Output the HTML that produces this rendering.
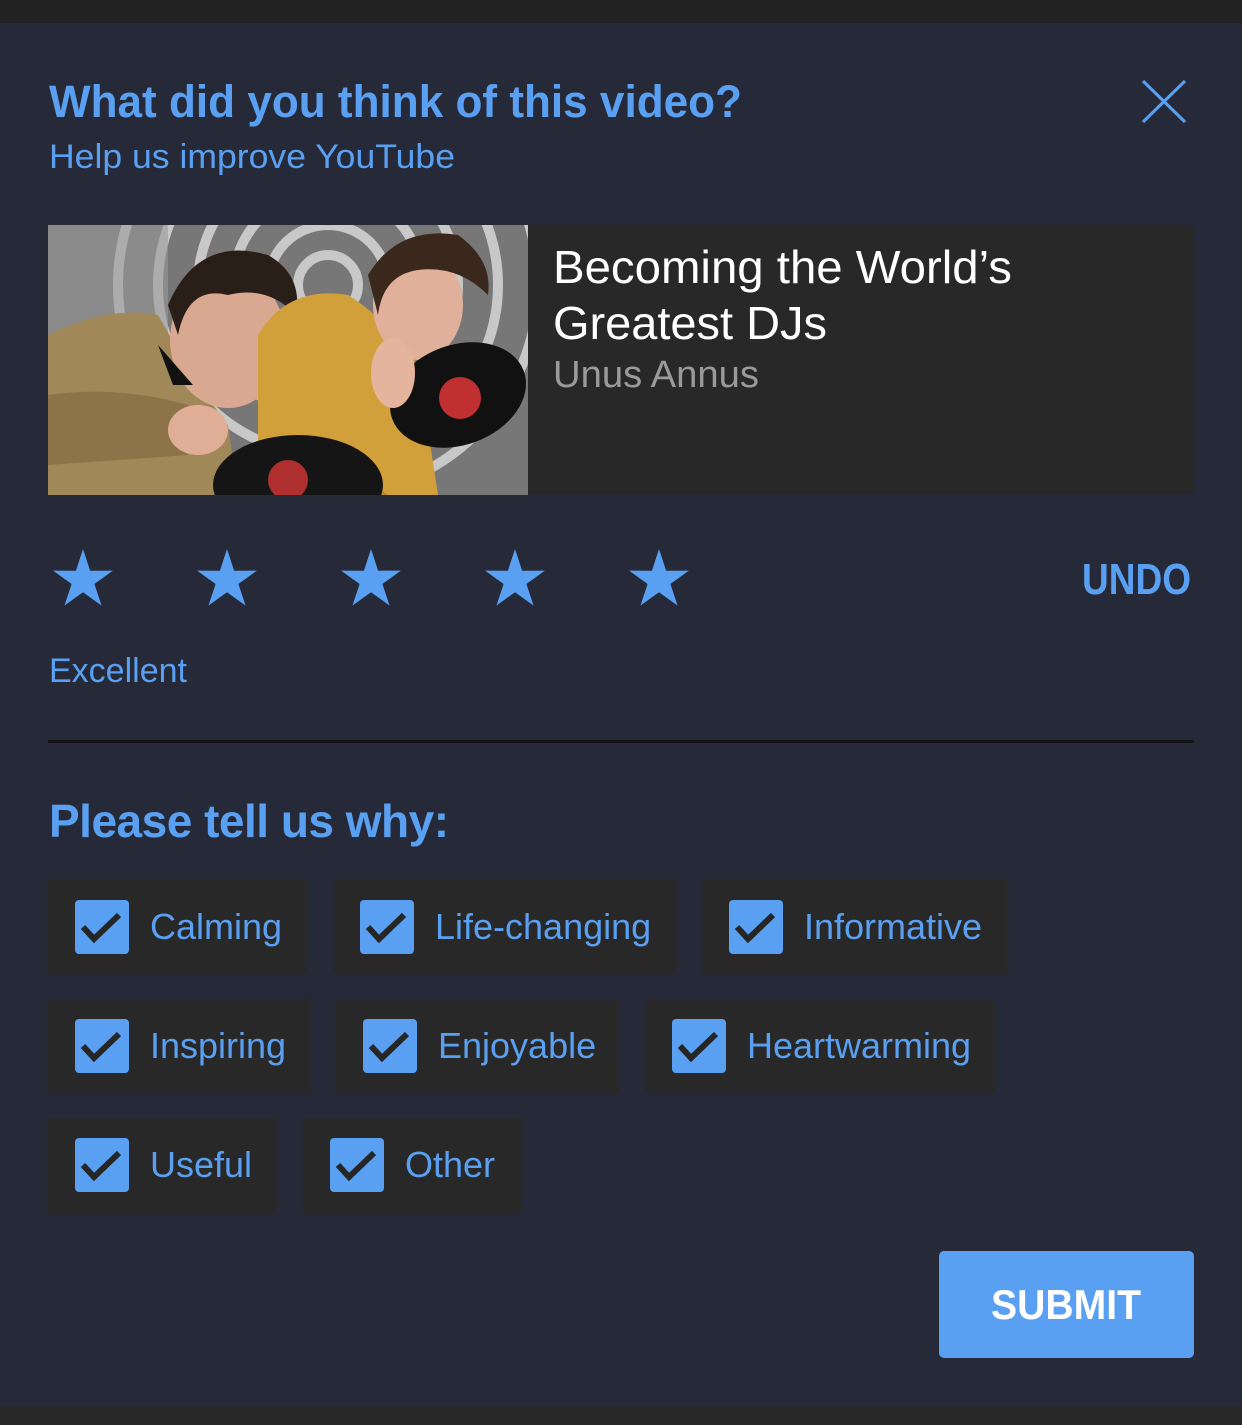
<!DOCTYPE html>
<html><head><meta charset="utf-8"><style>
*{margin:0;padding:0;box-sizing:border-box}
html,body{width:1242px;height:1425px;overflow:hidden;background:#262a38;font-family:"Liberation Sans",Arial,sans-serif}
.a{position:absolute;white-space:nowrap}
.blue{color:#5aa0f2}
.chip{position:absolute;background:#282828}
.cb{position:absolute;left:27px;top:20px;width:54px;height:54px;background:#5aa0f2;border-radius:4px}
.cb svg{position:absolute;left:0;top:0}
.chip span{position:absolute;left:102px;top:27px;font-size:36px;color:#5aa0f2;line-height:40px}
</style></head><body>
<div class="a" style="left:0;top:0;width:1242px;height:23px;background:#222"></div>
<div class="a" style="left:0;top:1406px;width:1242px;height:19px;background:#282828"></div>

<svg class="a" style="left:0;top:60px" width="1242" height="130">
<text x="49" y="57" font-family="Liberation Sans,Arial,sans-serif" font-weight="bold" font-size="45" fill="#5aa0f2" textLength="693" lengthAdjust="spacingAndGlyphs">What did you think of this video?</text>
<text x="49" y="108" font-family="Liberation Sans,Arial,sans-serif" font-size="34" fill="#5aa0f2" textLength="406" lengthAdjust="spacingAndGlyphs">Help us improve YouTube</text>
</svg>
<svg class="a" style="left:1140px;top:78px" width="50" height="48"><path d="M3 3L45 44M45 3L3 44" stroke="#5aa0f2" stroke-width="3" fill="none"/></svg>

<div class="a" style="left:48px;top:225px;width:1146px;height:269px;background:#282828"></div>
<svg class="a" style="left:48px;top:225px" width="480" height="270" viewBox="0 0 480 270">
<rect width="480" height="270" fill="#777"/>
<g fill="none" stroke="#ddd" stroke-width="10" opacity=".8">
<circle cx="280" cy="60" r="30"/><circle cx="280" cy="60" r="60"/><circle cx="280" cy="60" r="95"/><circle cx="280" cy="60" r="130"/><circle cx="280" cy="60" r="170"/><circle cx="280" cy="60" r="210"/>
</g>
<rect x="0" y="0" width="120" height="110" fill="#999" opacity=".6"/>
<path d="M0 110 Q60 80 110 90 L150 160 L180 200 L190 270 L0 270Z" fill="#a08858"/>
<path d="M0 170 Q70 160 140 180 L140 230 L0 240Z" fill="#8c7448"/>
<ellipse cx="180" cy="115" rx="58" ry="68" fill="#d9a890"/>
<path d="M120 80 Q150 10 220 30 Q255 50 248 90 Q220 60 180 70 Q140 60 130 110Z" fill="#2a1e18"/>
<path d="M210 110 Q240 60 300 70 Q340 95 370 140 L390 270 L210 270Z" fill="#d2a03a"/>
<path d="M230 250 L300 240 L340 270 L220 270Z" fill="#b88a2a"/>
<ellipse cx="370" cy="80" rx="45" ry="55" fill="#e0b09a"/>
<path d="M320 50 Q350 0 410 10 Q445 35 440 70 Q410 40 370 45 Q335 50 330 90Z" fill="#3a281c"/>
<ellipse cx="410" cy="170" rx="70" ry="50" transform="rotate(-20 410 170)" fill="#111"/>
<circle cx="412" cy="173" r="21" fill="#c03030"/>
<ellipse cx="250" cy="260" rx="85" ry="50" fill="#151515"/>
<circle cx="240" cy="255" r="20" fill="#b03030"/>
<ellipse cx="345" cy="148" rx="22" ry="35" fill="#e5b49c"/>
<ellipse cx="150" cy="205" rx="30" ry="25" fill="#e0ae96"/>
<path d="M110 120 L125 160 L145 160Z" fill="#111"/>
</svg>
<svg class="a" style="left:540px;top:230px" width="660" height="180">
<text x="13" y="53" font-family="Liberation Sans,Arial,sans-serif" font-size="46" fill="#fff" textLength="459" lengthAdjust="spacingAndGlyphs">Becoming the World’s</text>
<text x="13" y="109" font-family="Liberation Sans,Arial,sans-serif" font-size="46" fill="#fff" textLength="274" lengthAdjust="spacingAndGlyphs">Greatest DJs</text>
<text x="13" y="157" font-family="Liberation Sans,Arial,sans-serif" font-size="38" fill="#9a9a9a" textLength="206" lengthAdjust="spacingAndGlyphs">Unus Annus</text>
</svg>

<svg class="a" style="left:0;top:540px" width="760" height="80">
<defs><path id="st" d="M0 9L7.1 30.7 29.9 30.6 11.4 44 18.6 65.6 0 52.2 -18.6 65.6 -11.4 44 -29.9 30.6 -7.1 30.7Z" fill="#5aa0f2"/></defs>
<use href="#st" x="83" y="0"/><use href="#st" x="227" y="0"/><use href="#st" x="371" y="0"/><use href="#st" x="515" y="0"/><use href="#st" x="659" y="0"/>
</svg>
<svg class="a" style="left:1070px;top:550px" width="140" height="60"><text x="12" y="44" font-family="Liberation Sans,Arial,sans-serif" font-weight="bold" font-size="44" fill="#5aa0f2" textLength="109" lengthAdjust="spacingAndGlyphs">UNDO</text></svg>
<div class="a blue" style="left:49px;top:652px;font-size:34px">Excellent</div>
<div class="a" style="left:48px;top:740px;width:1146px;height:3px;background:#151518"></div>
<div class="a blue" style="left:49px;top:794px;font-size:46px;font-weight:bold;letter-spacing:-.5px">Please tell us why:</div>

<div class="chip" style="left:48px;top:880px;width:260px;height:93px"><div class="cb"><svg width="54" height="54"><path d="M8 27L19 39L44 15" stroke="#262626" stroke-width="6" fill="none"/></svg></div><span>Calming</span></div>
<div class="chip" style="left:333px;top:880px;width:344px;height:93px"><div class="cb"><svg width="54" height="54"><path d="M8 27L19 39L44 15" stroke="#262626" stroke-width="6" fill="none"/></svg></div><span>Life-changing</span></div>
<div class="chip" style="left:702px;top:880px;width:305px;height:93px"><div class="cb"><svg width="54" height="54"><path d="M8 27L19 39L44 15" stroke="#262626" stroke-width="6" fill="none"/></svg></div><span>Informative</span></div>
<div class="chip" style="left:48px;top:999px;width:263px;height:94px"><div class="cb"><svg width="54" height="54"><path d="M8 27L19 39L44 15" stroke="#262626" stroke-width="6" fill="none"/></svg></div><span>Inspiring</span></div>
<div class="chip" style="left:336px;top:999px;width:284px;height:94px"><div class="cb"><svg width="54" height="54"><path d="M8 27L19 39L44 15" stroke="#262626" stroke-width="6" fill="none"/></svg></div><span>Enjoyable</span></div>
<div class="chip" style="left:645px;top:999px;width:351px;height:94px"><div class="cb"><svg width="54" height="54"><path d="M8 27L19 39L44 15" stroke="#262626" stroke-width="6" fill="none"/></svg></div><span>Heartwarming</span></div>
<div class="chip" style="left:48px;top:1118px;width:229px;height:95px"><div class="cb"><svg width="54" height="54"><path d="M8 27L19 39L44 15" stroke="#262626" stroke-width="6" fill="none"/></svg></div><span>Useful</span></div>
<div class="chip" style="left:303px;top:1118px;width:218px;height:95px"><div class="cb"><svg width="54" height="54"><path d="M8 27L19 39L44 15" stroke="#262626" stroke-width="6" fill="none"/></svg></div><span>Other</span></div>

<div class="a" style="left:939px;top:1251px;width:255px;height:107px;background:#5aa0f2;border-radius:5px"></div>
<svg class="a" style="left:939px;top:1251px" width="255" height="107"><text x="52" y="68" font-family="Liberation Sans,Arial,sans-serif" font-weight="bold" font-size="42" fill="#fff" textLength="150" lengthAdjust="spacingAndGlyphs">SUBMIT</text></svg>
</body></html>
